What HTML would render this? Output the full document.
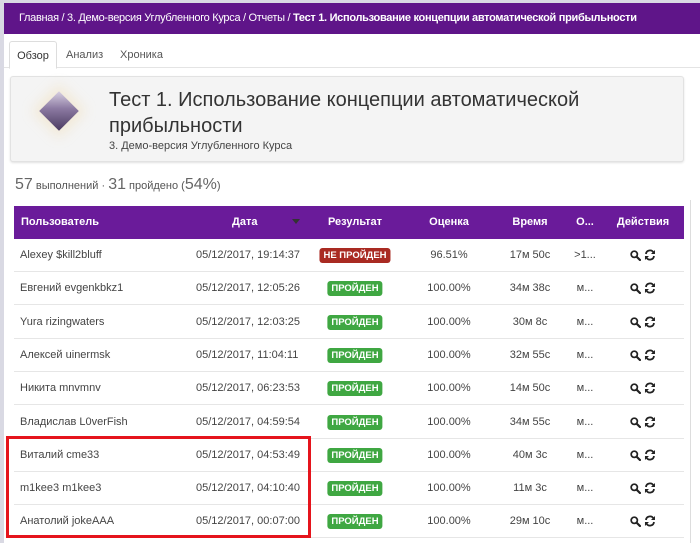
<!DOCTYPE html>
<html><head><meta charset="utf-8"><style>
*{margin:0;padding:0;box-sizing:border-box}
body{width:700px;height:543px;overflow:hidden;background:#fff;font-family:"Liberation Sans","DejaVu Sans",sans-serif;position:relative;color:#333}
.lstrip{position:absolute;left:0;top:0;width:4px;height:543px;background:#d9d9e3}
.tstrip{position:absolute;left:0;top:0;width:700px;height:3px;background:#d9d9e3}
.bar{position:absolute;left:4px;top:3px;width:696px;height:31px;background:#5f1589;color:#fff;font-size:11px;line-height:31px;padding-left:15px;white-space:nowrap;letter-spacing:-0.3px}
.tabs{position:absolute;left:4px;top:34px;width:696px;height:34px;border-bottom:1px solid #e4e4e4}
.tab{position:absolute;top:7px;height:28px;font-size:11px;line-height:28px;color:#555}
.tab.a{left:5px;width:48px;border:1px solid #ddd;border-bottom:1px solid #fff;border-radius:3px 3px 0 0;text-align:center;background:#fff;color:#333}
.card{position:absolute;left:10px;top:76px;width:674px;height:86px;background:#f4f4f4;border:1px solid #e2e2e2;border-radius:3px;box-shadow:0 1px 2px rgba(0,0,0,.12)}
.card h1{position:absolute;left:98px;top:10px;font-size:20px;font-weight:normal;line-height:26px;color:#333;width:520px}
.card .sub{position:absolute;left:98px;top:63px;font-size:11px;color:#444}
.gem{position:absolute;left:34px;top:20px;width:28px;height:28px;transform:rotate(45deg);background:linear-gradient(135deg,#d8d0e2,#8a78a0 45%,#4a3a60);box-shadow:0 0 12px 5px rgba(240,215,160,.35)}
.stats{position:absolute;left:15px;top:176px;font-size:11px;color:#555}
.stats b{font-weight:normal;font-size:16px;color:#666}
.thead{position:absolute;left:14px;top:206px;width:670px;height:33px;background:#6a1b9a;color:#fff;font-size:11px;font-weight:bold}
.thead span,.row span{position:absolute;top:0;line-height:33px;white-space:nowrap}
.c{transform:translateX(-50%)}
.row{position:absolute;left:14px;width:670px;height:33px;border-bottom:1px solid #e6e6e6;font-size:11px;color:#444}
.row span.bd{top:9px;line-height:15px;padding:0 4px;border-radius:3px;color:#fff;font-weight:bold;font-size:9.5px}
.g{background:#3fa742}.r{background:#a92a22}
.vline{position:absolute;left:690px;top:200px;width:1px;height:343px;background:#ddd}
.red{position:absolute;left:6px;top:436px;width:305px;height:102px;border:3px solid #e5141c}
svg{vertical-align:middle}
</style></head><body>
<div class="tstrip"></div><div class="lstrip"></div>
<div class="bar">Главная / 3. Демо-версия Углубленного Курса / Отчеты / <b>Тест 1. Использование концепции автоматической прибыльности</b></div>
<div class="tabs"><div class="tab a">Обзор</div><div class="tab" style="left:62px">Анализ</div><div class="tab" style="left:116px">Хроника</div></div>
<div class="card"><div class="gem"></div><h1>Тест 1. Использование концепции автоматической прибыльности</h1><div class="sub">3. Демо-версия Углубленного Курса</div></div>
<div class="stats"><b>57</b> выполнений · <b>31</b> пройдено (<b>54%</b>)</div>
<div class="thead">
<span style="left:7px">Пользователь</span><span style="left:218px">Дата</span>
<span style="left:278px;top:13px;width:0;height:0;border-left:4px solid transparent;border-right:4px solid transparent;border-top:5px solid #333;line-height:0"></span>
<span class="c" style="left:341px">Результат</span><span class="c" style="left:435px">Оценка</span><span class="c" style="left:516px">Время</span><span class="c" style="left:571px">О...</span><span class="c" style="left:629px">Действия</span></div>
<div class="vline"></div>
<div id="rows"></div>
<script>
var d=[["Alexey $kill2bluff","05/12/2017, 19:14:37",0,"96.51%","17м 50с",">1..."],
["Евгений evgenkbkz1","05/12/2017, 12:05:26",1,"100.00%","34м 38с","м..."],
["Yura rizingwaters","05/12/2017, 12:03:25",1,"100.00%","30м 8с","м..."],
["Алексей uinermsk","05/12/2017, 11:04:11",1,"100.00%","32м 55с","м..."],
["Никита mnvmnv","05/12/2017, 06:23:53",1,"100.00%","14м 50с","м..."],
["Владислав L0verFish","05/12/2017, 04:59:54",1,"100.00%","34м 55с","м..."],
["Виталий cme33","05/12/2017, 04:53:49",1,"100.00%","40м 3с","м..."],
["m1kee3 m1kee3","05/12/2017, 04:10:40",1,"100.00%","11м 3с","м..."],
["Анатолий jokeAAA","05/12/2017, 00:07:00",1,"100.00%","29м 10с","м..."]];
var ic='<svg width="11" height="11" viewBox="0 0 11 11"><circle cx="4.3" cy="4.3" r="3.1" fill="none" stroke="#222" stroke-width="1.7"/><path d="M6.6 6.6L10 10" stroke="#222" stroke-width="2.2" stroke-linecap="round"/></svg> <svg width="12" height="12" viewBox="0 0 12 12"><path d="M2 5A4 4 0 0 1 9.5 3.5M10 7A4 4 0 0 1 2.5 8.5" fill="none" stroke="#222" stroke-width="1.8"/><path d="M11 1V5H7zM1 11V7H5z" fill="#222"/></svg>';
var h='';d.forEach(function(r,i){var t=239+Math.round(i*33.3);
h+='<div class="row" style="top:'+t+'px"><span style="left:6px">'+r[0]+'</span><span style="left:182px">'+r[1]+'</span><span class="c bd '+(r[2]?'g" style="left:341px">ПРОЙДЕН':'r" style="left:341px">НЕ ПРОЙДЕН')+'</span><span class="c" style="left:435px">'+r[3]+'</span><span class="c" style="left:516px">'+r[4]+'</span><span class="c" style="left:571px">'+r[5]+'</span><span class="c" style="left:629px">'+ic+'</span></div>';});
document.getElementById('rows').innerHTML=h;
</script>
<div class="red"></div>
</body></html>
